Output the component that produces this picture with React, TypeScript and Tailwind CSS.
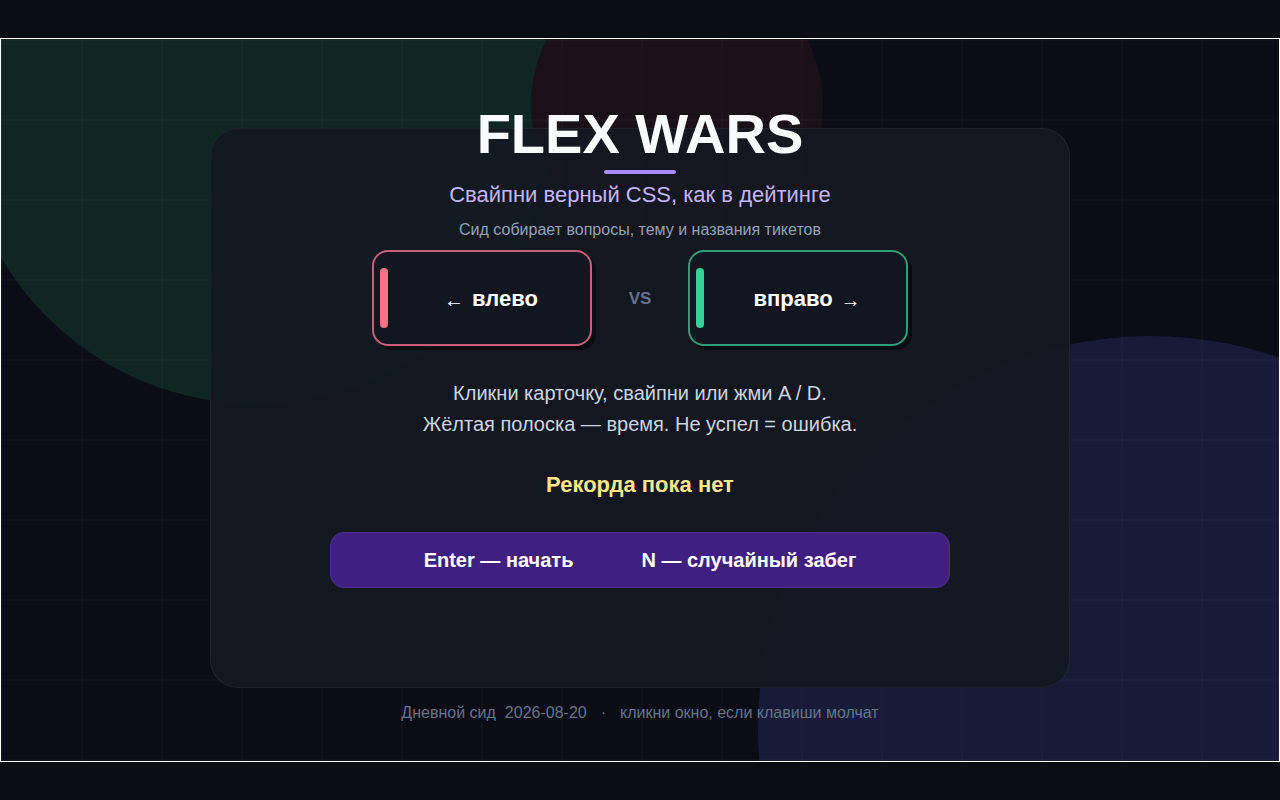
import React from 'react';

const font = { fontFamily: '"Liberation Sans", Arial, sans-serif' };

interface ChoiceProps {
  label: string;
  side: 'left' | 'right';
}

const Choice: React.FC<ChoiceProps> = ({ label, side }) => {
  const isLeft = side === 'left';
  return (
    <div
      className={`w-[220px] h-24 rounded-2xl border-2 bg-[#121620] shadow-[4px_4px_0_rgba(0,0,0,0.45)] flex items-center pl-[6px] ${
        isLeft ? 'border-[#c8607a]' : 'border-[#2c9e79]'
      }`}
    >
      <div className={`w-2 h-[60px] rounded-full ${isLeft ? 'bg-[#fb7185]' : 'bg-[#34d399]'}`} />
      <div className="flex-1 flex items-center justify-center gap-[8px] pl-1 text-white">
        {isLeft && <span className="text-[20px] font-normal mt-1">←</span>}
        <span className="text-[22px] font-bold">{label}</span>
        {!isLeft && <span className="text-[20px] font-normal mt-1">→</span>}
      </div>
    </div>
  );
};

const App: React.FC = () => {
  return (
    <div className="min-h-screen bg-[#0a0d14] flex items-center" style={font}>
      <div className="relative w-full h-[724px] border border-white bg-[#0a0d15] overflow-hidden">
        {/* фоновые пятна */}
        <div className="absolute left-[-41px] top-[-229px] w-[594px] h-[594px] rounded-full bg-[#0f2623]" />
        <div className="absolute left-[530px] top-[-80px] w-[292px] h-[292px] rounded-full bg-[#1a1117]" />
        <div className="absolute left-[757px] top-[297px] w-[786px] h-[786px] rounded-full bg-[#181b38]" />

        {/* сетка */}
        <div className="absolute inset-0 bg-[linear-gradient(to_right,rgba(255,255,255,0.02)_2px,transparent_2px),linear-gradient(to_bottom,rgba(255,255,255,0.02)_2px,transparent_2px)] bg-[size:80px_80px]" />

        <div className="relative flex flex-col items-center pt-[89px]">
          <div className="w-[860px] h-[560px] rounded-[28px] bg-[#141821]/95 border border-white/5 flex flex-col items-center">
            <h1 className="-mt-[23px] text-[56px] leading-none font-bold text-[#f8fafc]">FLEX WARS</h1>
            <div className="mt-2 w-[72px] h-1 rounded-full bg-[#a78bfa]" />
            <p className="mt-[7px] text-[22px] leading-7 text-[#c4b5fd]">Свайпни верный CSS, как в дейтинге</p>
            <p className="mt-[11px] text-[16px] leading-5 text-[#94a3b8]">Сид собирает вопросы, тему и названия тикетов</p>

            <div className="mt-[10px] flex items-center gap-9">
              <Choice label="влево" side="left" />
              <span className="w-6 mt-[2px] text-center text-[17px] font-bold text-[#64748b]">VS</span>
              <Choice label="вправо" side="right" />
            </div>

            <div className="mt-[32px] text-center text-[20px] leading-[31px] text-[#cbd5e1]">
              <p>Кликни карточку, свайпни или жми A / D.</p>
              <p>Жёлтая полоска — время. Не успел = ошибка.</p>
            </div>

            <p className="mt-[31px] text-[22px] leading-7 font-bold text-[#fde68a]">Рекорда пока нет</p>

            <div className="mt-[33px] w-[620px] h-14 rounded-[14px] bg-[#3f2080] border border-[#4e2d93] flex items-center justify-center gap-[68px] text-[20px] font-bold text-white">
              <span>Enter — начать</span>
              <span>N — случайный забег</span>
            </div>
          </div>

          <div className="mt-[15px] flex items-center text-[16px] leading-5 text-[#64748b]">
            <span>Дневной сид</span>
            <span className="ml-[9px]">2026-08-20</span>
            <span className="mx-[14px]">·</span>
            <span>кликни окно, если клавиши молчат</span>
          </div>
        </div>
      </div>
    </div>
  );
};

export default App;
